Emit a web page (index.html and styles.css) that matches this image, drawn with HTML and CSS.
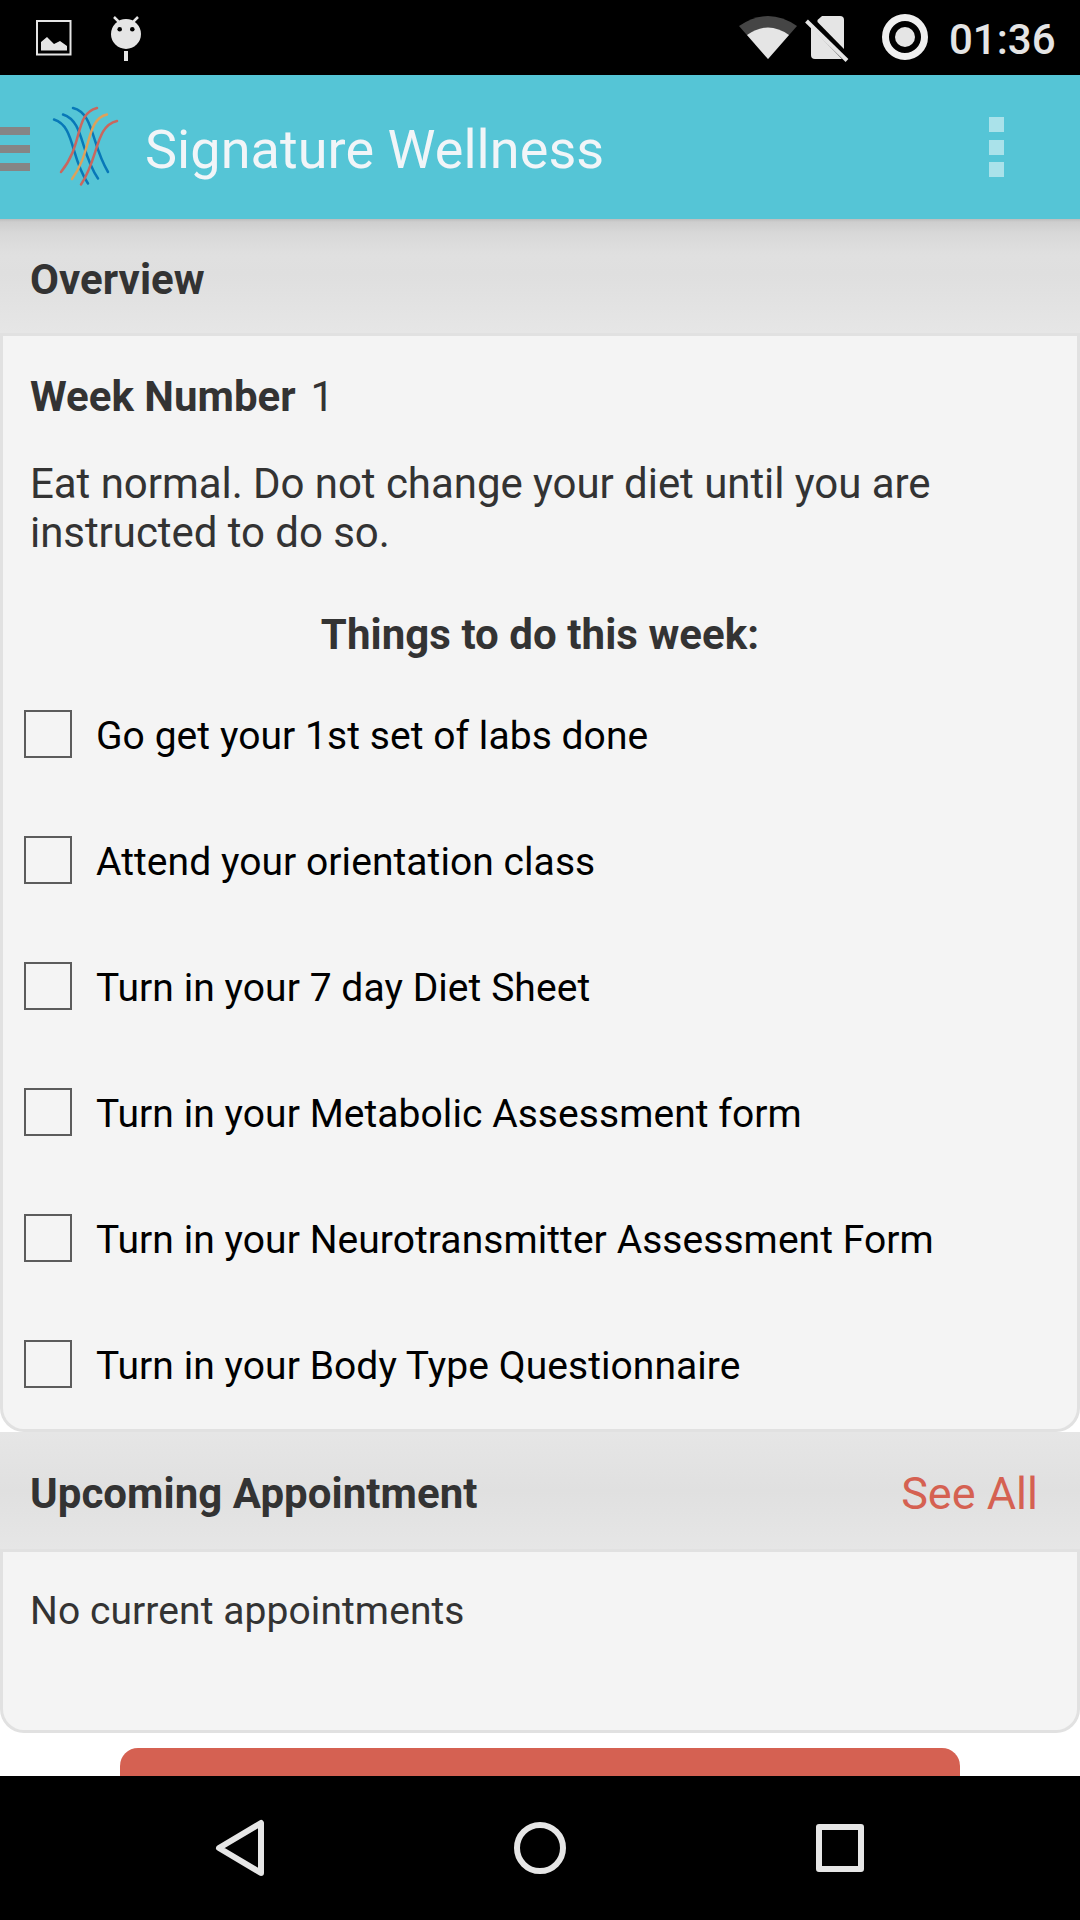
FILE: index.html
```html
<!DOCTYPE html>
<html lang="en">
<head>
    <meta charset="UTF-8">
    <meta name="viewport" content="width=device-width, initial-scale=1.0">
    <title>Signature Wellness</title>
    <link rel="stylesheet" href="styles.css">
</head>
<body>
    <div class="screen">
        <div class="status">
            <svg class="notify" width="150" height="75" viewBox="0 0 150 75">
                <rect x="37" y="21" width="33.5" height="33.5" fill="none" stroke="#e5e5e5" stroke-width="2"/>
                <path d="M41 50.5V42L47 37L54 44L60 41L67 46V50.5Z" fill="#e5e5e5"/>
                <circle cx="126" cy="34" r="15" fill="#e5e5e5"/>
                <path d="M114 17L119 22M138 17L133 22" stroke="#e5e5e5" stroke-width="2.5"/>
                <circle cx="119.7" cy="29.3" r="2.3"/>
                <circle cx="132.3" cy="29.3" r="2.3"/>
                <rect x="124" y="51" width="4" height="10" fill="#e5e5e5"/>
            </svg>
            <svg class="signals" width="200" height="75" viewBox="735 0 200 75">
                <path d="M739 26Q768 6 797 26L768 59Z" fill="#454545"/>
                <path d="M747 35Q768 20 789 35L768 59Z" fill="#e5e5e5"/>
                <path d="M817.5 20L822 16H840Q844 16 844 20V49L817.5 22Z" fill="#e5e5e5"/>
                <path d="M811 27L842 59H815Q811 59 811 55Z" fill="#e5e5e5"/>
                <path d="M806.5 21L847 60.5" stroke="#e5e5e5" stroke-width="4"/>
                <circle cx="905" cy="37" r="19.5" fill="none" stroke="#efefef" stroke-width="7"/>
                <circle cx="905" cy="37" r="10" fill="#e5e5e5"/>
            </svg>
            <span class="clock">01:36</span>
        </div>
        <div class="appbar">
            <div class="drawer"><i></i><i></i><i></i></div>
            <svg class="logo" width="75" height="90" viewBox="48 100 75 90">
                <g fill="none" stroke-width="2.5" stroke-linecap="round">
                    <g stroke="#0878b8">
                        <path d="M73 108C94 113 91 144 108 172"/>
                        <path d="M63 114.500C84 121 80 152 98 178.500"/>
                        <path d="M54 119.500C75 126 70 157 88 183.500"/>
                    </g>
                    <path d="M97 108C74 114 84 144 61 172" stroke="#c9675e"/>
                    <path d="M107 114.500C86 119 92 152 72 179" stroke="#dda25b"/>
                    <path d="M117 121C95 126 99 158 81 184.500" stroke="#c9675e"/>
                </g>
            </svg>
            <h1>Signature Wellness</h1>
            <div class="more"><i></i><i></i><i></i></div>
        </div>
        <div class="content">
            <div class="head first">
                <h2>Overview</h2>
            </div>
            <div class="card overview">
                <p class="week"><b>Week Number</b><span>1</span></p>
                <p class="note">Eat normal. Do not change your diet until you are instructed to do so.</p>
                <h3>Things to do this week:</h3>
                <div class="tasks">
                    <label><input type="checkbox"><span>Go get your 1st set of labs done</span></label>
                    <label><input type="checkbox"><span>Attend your orientation class</span></label>
                    <label><input type="checkbox"><span>Turn in your 7 day Diet Sheet</span></label>
                    <label><input type="checkbox"><span>Turn in your Metabolic Assessment form</span></label>
                    <label><input type="checkbox"><span>Turn in your Neurotransmitter Assessment Form</span></label>
                    <label><input type="checkbox"><span>Turn in your Body Type Questionnaire</span></label>
                </div>
            </div>
            <div class="head">
                <h2>Upcoming Appointment</h2>
                <a class="all">See All</a>
            </div>
            <div class="card appointment">
                <p>No current appointments</p>
            </div>
            <button class="action"></button>
        </div>
        <div class="navbar">
            <svg width="60" height="60" viewBox="0 0 60 60"><path d="M51 5V55L9 30Z"/></svg>
            <svg width="60" height="60" viewBox="0 0 60 60"><circle cx="30" cy="30" r="23"/></svg>
            <svg width="60" height="60" viewBox="0 0 60 60"><rect x="9" y="9" width="42" height="42"/></svg>
        </div>
    </div>
</body>
</html>
```
FILE: styles.css
```css
*{
    margin: 0px;
    padding: 0px;
    box-sizing: border-box;
}
body{
    font-family: Roboto, "Liberation Sans", sans-serif;
    color: #333333;
    background-color: white;
}
.screen{
    width: 1080px;
    height: 1920px;
    display: flex;
    flex-direction: column;
    overflow: hidden;
}
.status{
    height: 75px;
    flex: none;
    display: flex;
    background-color: black;
}
.signals{
    margin-left: auto;
}
.clock{
    width: 145px;
    padding-left: 14px;
    font-size: 42px;
    line-height: 79px;
    font-weight: 500;
    color: #e5e5e5;
}
.appbar{
    height: 144px;
    flex: none;
    display: flex;
    align-items: center;
    background-color: #55c5d6;
}
.drawer{
    width: 30px;
    margin-right: 18px;
    padding-top: 4px;
    display: flex;
    flex-direction: column;
    gap: 10px;
}
.drawer i{
    height: 8px;
    background-color: #858585;
}
.logo{
    margin-top: -4px;
}
h1{
    margin-left: 22px;
    padding-top: 6px;
    font-size: 54px;
    line-height: 64px;
    font-weight: 400;
    letter-spacing: 0.06px;
    color: #f1f5f8;
}
.more{
    width: 15px;
    margin-left: auto;
    margin-right: 76px;
    display: flex;
    flex-direction: column;
    gap: 7.5px;
}
.more i{
    height: 15px;
    background-color: #aae2ea;
}
.content{
    height: 1557px;
    flex: none;
    display: flex;
    flex-direction: column;
    overflow: hidden;
}
.head{
    height: 120px;
    flex: none;
    display: flex;
    justify-content: space-between;
    padding: 37px 42px 0px 30px;
    background: linear-gradient(#e6e6e6, #e0e0e0 50%, #e6e6e6);
    border: 3px solid #e1e1e1;
    border-width: 0px 0px 3px;
}
.first{
    height: 117px;
    padding-top: 36px;
    background: linear-gradient(#bdbdbd, #cecece 3px, #d8d8d8 14px, #e0e0e0 36px, #dfdfdf 55px, #e6e6e6);
}
h2, h3{
    font-size: 42px;
    line-height: 49px;
    font-weight: 700;
    letter-spacing: 0.05px;
}
.all{
    font-size: 45px;
    line-height: 49px;
    color: #d56152;
}
.card{
    flex: none;
    background-color: #f4f4f4;
    border: 3px solid #e1e1e1;
    border-top: none;
    border-radius: 0px 0px 24px 24px;
}
.overview{
    height: 1096px;
    padding-top: 36px;
}
.week{
    display: flex;
    gap: 15px;
    padding-left: 27px;
    font-size: 42px;
    line-height: 49px;
}
.note{
    padding: 38px 100px 0px 27px;
    font-size: 42px;
    line-height: 49px;
    letter-spacing: -0.05px;
}
h3{
    padding-top: 53px;
    text-align: center;
}
.tasks{
    padding-top: 12px;
}
.tasks label{
    height: 126px;
    display: flex;
    align-items: center;
    padding-left: 21px;
    gap: 24px;
    font-size: 39px;
    line-height: 49px;
    letter-spacing: 0.06px;
    color: black;
}
.tasks span{
    padding-top: 4px;
}
.tasks input{
    appearance: none;
    width: 48px;
    height: 48px;
    border: 2px solid #5c5c5c;
}
.appointment{
    height: 181px;
    padding: 35px 27px;
    font-size: 39px;
    line-height: 49px;
    letter-spacing: 0.08px;
}
.action{
    width: 840px;
    height: 144px;
    flex: none;
    align-self: center;
    margin-top: 15px;
    border: none;
    border-radius: 18px;
    background-color: #d56152;
}
.navbar{
    height: 144px;
    flex: none;
    display: flex;
    justify-content: center;
    align-items: center;
    gap: 240px;
    background-color: black;
}
.navbar svg{
    fill: none;
    stroke: #e6e6e6;
    stroke-width: 6px;
    stroke-linejoin: round;
}
```
